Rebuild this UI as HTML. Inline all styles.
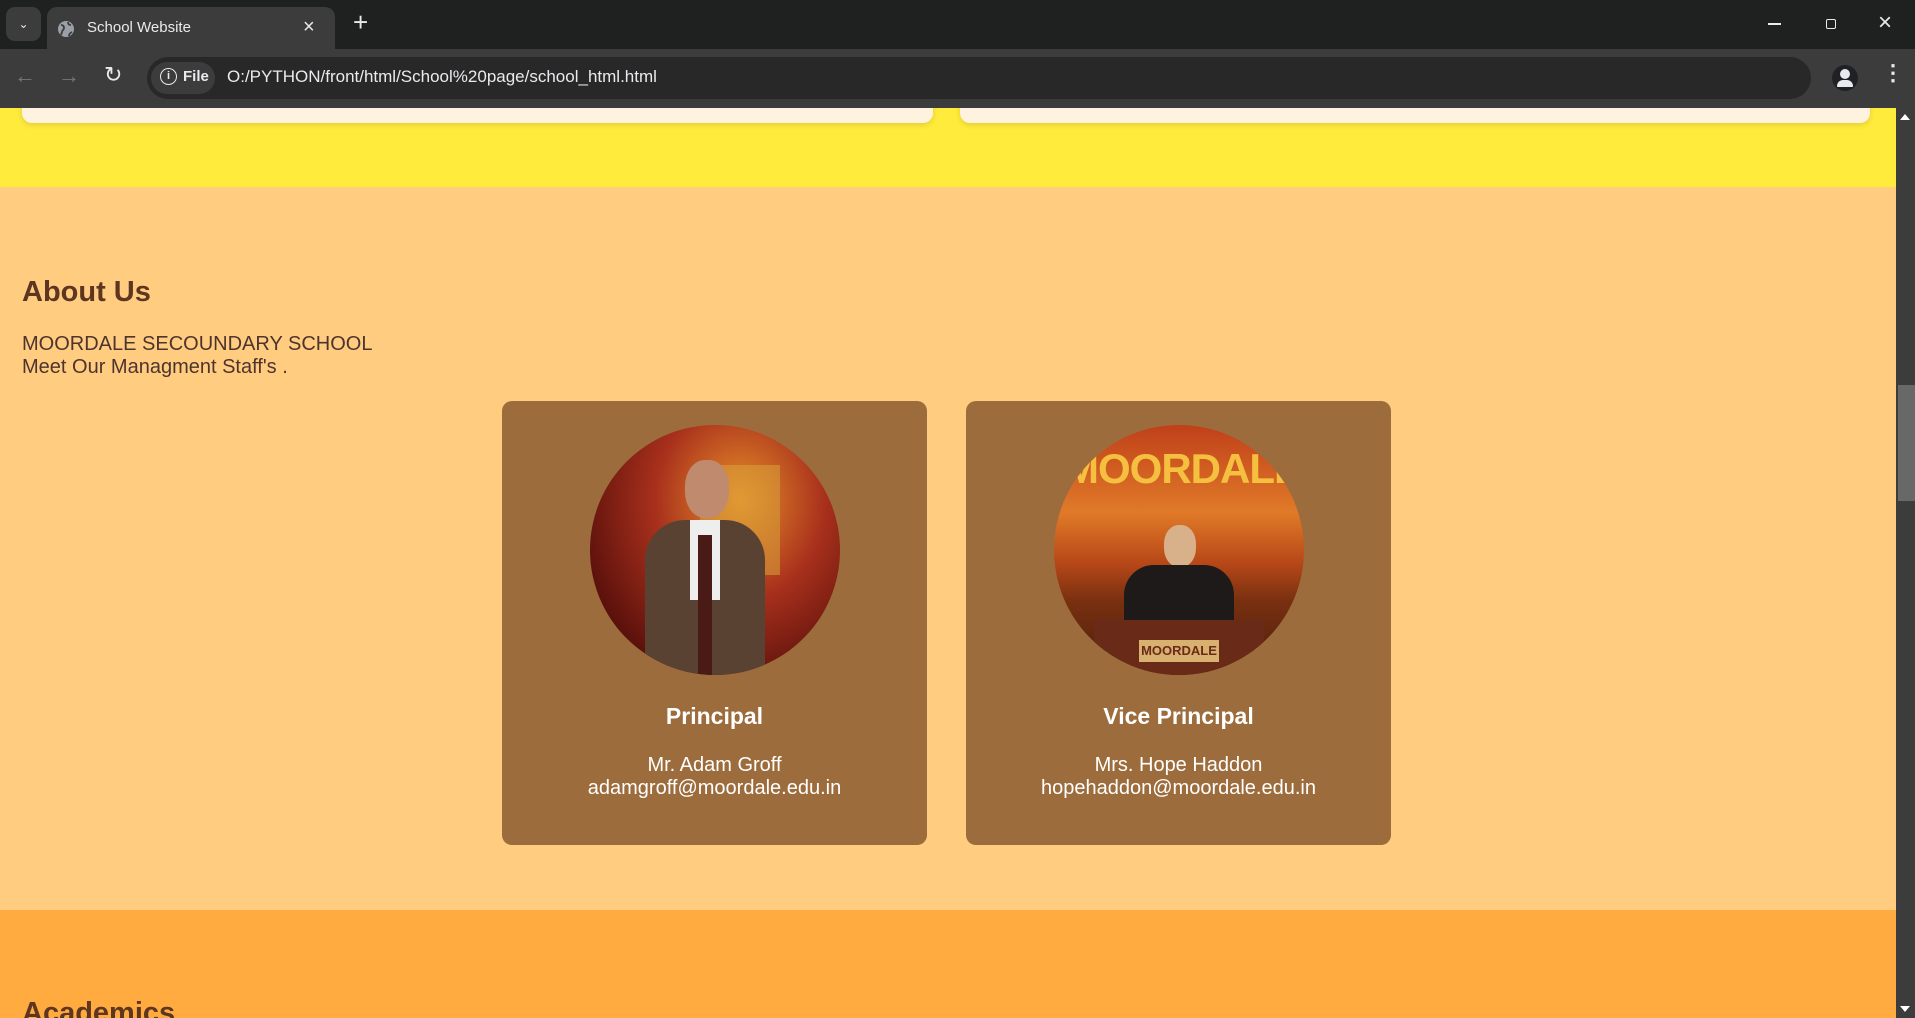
<!DOCTYPE html>
<html><head><meta charset="utf-8"><style>
*{box-sizing:border-box;margin:0;padding:0}
body{width:1915px;height:1018px;overflow:hidden;font-family:"Liberation Sans",Arial,sans-serif;background:#ffcc80;position:relative}
.tabbar{position:absolute;left:0;top:0;width:1915px;height:49px;background:#1f2020}
.toolbar{position:absolute;left:0;top:49px;width:1915px;height:59px;background:#3c3c3c}
.tab{position:absolute;left:47px;top:7px;width:288px;height:42px;background:#3c3c3c;border-radius:10px 10px 0 0;color:#e8eaed;font-size:15px}
.url{position:absolute;left:147px;top:57px;width:1664px;height:42px;background:#282828;border-radius:21px;color:#e8eaed;font-size:17px}
.page{position:absolute;left:0;top:108px;width:1896px;height:910px;overflow:hidden}
.scroll{position:absolute;right:0;top:108px;width:19px;height:910px;background:#3c3c3c}
.card{position:absolute;background:#9c6c3c;border-radius:10px;width:425px;height:444px;top:401px;color:#fff;text-align:center}
.pic{position:absolute;left:88px;top:24px;width:250px;height:250px;border-radius:50%;overflow:hidden}
.card h3{position:absolute;top:302px;width:100%;font-size:23px}
.card p{position:absolute;top:353px;width:100%;font-size:20px;line-height:23px}
</style></head><body>
<div class="tabbar">
 <div style="position:absolute;left:6px;top:7px;width:35px;height:34px;background:#3c3c3c;border-radius:9px;color:#e8eaed;text-align:center;line-height:34px;font-size:12px">&#8964;</div>
 <div class="tab"><svg style="position:absolute;left:10px;top:13px" width="18" height="18" viewBox="0 0 18 18"><circle cx="9" cy="9" r="8" fill="#9aa0a6"/><path d="M4 5c2 0 3 1 3 3s-2 2-2 4l-1 3M11 2c0 2 1 3 3 3M12 16c0-2 1-3 3-4" stroke="#3c3c3c" stroke-width="1.8" fill="none"/></svg><span style="position:absolute;left:40px;top:12px">School Website</span><span style="position:absolute;left:256px;top:9px;font-size:20px">×</span></div>
 <span style="position:absolute;left:353px;top:7px;color:#e8eaed;font-size:26px">+</span>
 <div style="position:absolute;left:1768px;top:23px;width:13px;height:1.5px;background:#e8eaed"></div>
 <div style="position:absolute;left:1826px;top:19px;width:10px;height:10px;border:1.5px solid #e8eaed;border-radius:2px"></div>
 <span style="position:absolute;left:1878px;top:9px;color:#e8eaed;font-size:24px">×</span>
</div>
<div class="toolbar">
 <span style="position:absolute;left:14px;top:14px;color:#777;font-size:22px">←</span>
 <span style="position:absolute;left:58px;top:14px;color:#777;font-size:22px">→</span>
 <span style="position:absolute;left:104px;top:13px;color:#e8eaed;font-size:22px">↻</span>
 <span style="position:absolute;left:1771px;top:12px;color:#e8eaed;font-size:24px">☆</span>
 <div style="position:absolute;left:1832px;top:16px;width:26px;height:26px;border-radius:50%;background:#202124"></div>
 <div style="position:absolute;left:1840px;top:20px;width:10px;height:10px;border-radius:50%;background:#e8eaed"></div>
 <div style="position:absolute;left:1837px;top:31px;width:16px;height:7px;border-radius:7px 7px 1px 1px;background:#e8eaed"></div>
 <span style="position:absolute;left:1882px;top:11px;color:#e8eaed;font-size:22px;font-weight:bold">⋮</span>
</div>
<div class="url">
 <div style="position:absolute;left:4px;top:5px;width:64px;height:32px;background:#3c3c3c;border-radius:16px"></div>
 <span style="position:absolute;left:13px;top:11px;width:17px;height:17px;border:1.5px solid #e8eaed;border-radius:50%;font-size:11px;text-align:center;line-height:14px;font-weight:bold">i</span>
 <span style="position:absolute;left:36px;top:11px;font-weight:bold;font-size:15px">File</span>
 <span style="position:absolute;left:80px;top:10px">O:/PYTHON/front/html/School%20page/school_html.html</span>
</div>
<div class="page">
 <div style="position:absolute;left:0;top:0;width:1896px;height:79px;background:#ffeb3b"></div>
 <div style="position:absolute;left:22px;top:-20px;width:911px;height:35px;background:#fff3e0;border-radius:10px;box-shadow:0 2px 6px rgba(0,0,0,.12)"></div>
 <div style="position:absolute;left:960px;top:-20px;width:910px;height:35px;background:#fff3e0;border-radius:10px;box-shadow:0 2px 6px rgba(0,0,0,.12)"></div>
 <div style="position:absolute;left:0;top:802px;width:1896px;height:120px;background:#ffab40"></div>
 <div style="position:absolute;left:22px;top:168px;font-size:29px;font-weight:bold;color:#5d3520">About Us</div>
 <div style="position:absolute;left:22px;top:225px;font-size:20px;line-height:23px;color:#4e342e">MOORDALE SECOUNDARY SCHOOL<br>Meet Our Managment Staff's .</div>
 <div style="position:absolute;left:22px;top:889px;font-size:29px;font-weight:bold;color:#5d3520">Academics</div>
</div>
<div class="card" style="left:502px">
 <div class="pic" style="background:radial-gradient(ellipse at 60% 30%,#e8902a 0%,#a8301c 40%,#4a0a08 85%)">
  <div style="position:absolute;left:110px;top:40px;width:80px;height:110px;background:#d9a23a;opacity:.55"></div>
  <div style="position:absolute;left:95px;top:35px;width:44px;height:58px;border-radius:45%;background:#c08a6e"></div>
  <div style="position:absolute;left:55px;top:95px;width:120px;height:170px;border-radius:40px 40px 0 0;background:#5a4232"></div>
  <div style="position:absolute;left:100px;top:95px;width:30px;height:80px;background:#eee"></div>
  <div style="position:absolute;left:108px;top:110px;width:14px;height:140px;background:#4a1a16"></div>
 </div>
 <h3>Principal</h3><p>Mr. Adam Groff<br>adamgroff@moordale.edu.in</p>
</div>
<div class="card" style="left:966px">
 <div class="pic" style="background:linear-gradient(#c0401a 0%,#e07a28 35%,#b84818 55%,#7a3010 70%,#4a1e0c 100%)">
  <div style="position:absolute;left:10px;top:20px;width:230px;height:50px;color:#f5c040;font-weight:bold;font-size:42px;letter-spacing:-1px">MOORDALE</div>
  <div style="position:absolute;left:110px;top:100px;width:32px;height:42px;border-radius:45%;background:#d8b08a"></div>
  <div style="position:absolute;left:70px;top:140px;width:110px;height:80px;border-radius:30px 30px 0 0;background:#1e1a1a"></div>
  <div style="position:absolute;left:40px;top:195px;width:170px;height:60px;background:#6a2a18"></div>
  <div style="position:absolute;left:85px;top:215px;width:80px;height:22px;background:#d8b070;color:#6a2a18;font-size:13px;font-weight:bold;text-align:center;line-height:22px">MOORDALE</div>
 </div>
 <h3>Vice Principal</h3><p>Mrs. Hope Haddon<br>hopehaddon@moordale.edu.in</p>
</div>
<div class="scroll">
 <div style="position:absolute;left:2px;top:277px;width:17px;height:116px;background:#686868"></div>
 <div style="position:absolute;left:4px;top:6px;width:0;height:0;border-left:5px solid transparent;border-right:5px solid transparent;border-bottom:6px solid #fff"></div>
 <div style="position:absolute;left:4px;top:898px;width:0;height:0;border-left:5px solid transparent;border-right:5px solid transparent;border-top:6px solid #fff"></div>
</div>
</body></html>
